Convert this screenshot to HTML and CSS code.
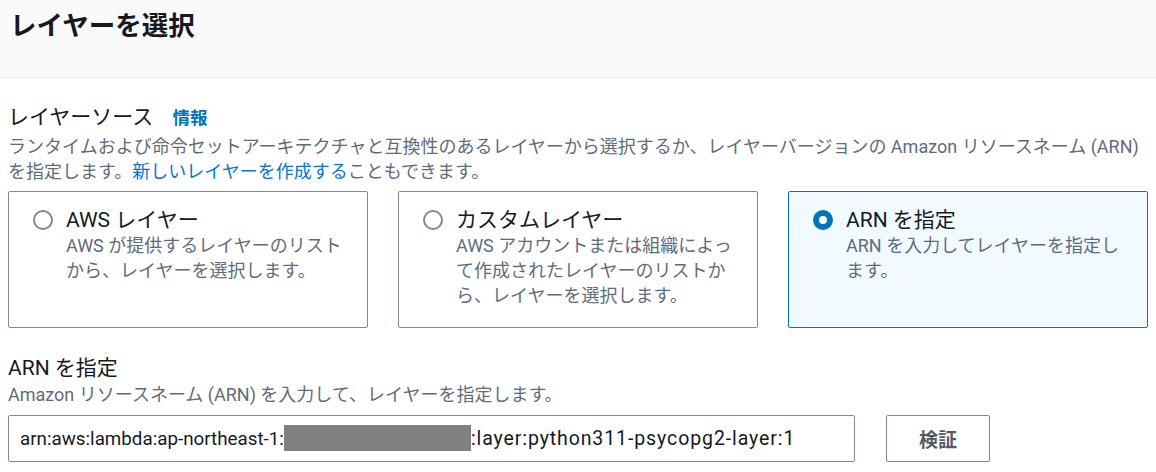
FILE: index.html
```html
<!DOCTYPE html>
<html lang="ja">
<head>
    <meta charset="UTF-8">
    <meta name="viewport" content="width=device-width, initial-scale=1.0">
    <title>レイヤーを選択</title>
    <link rel="stylesheet" href="styles.css">
</head>
<body>
    <div class="page-header">
        <h1>レイヤーを選択</h1>
    </div>

    <div class="content">
        <div class="field-label">
            レイヤーソース <a class="info-link" href="#">情報</a>
        </div>
        <p class="field-desc">ランタイムおよび命令セットアーキテクチャと互換性のあるレイヤーから選択するか、レイヤーバージョンの Amazon リソースネーム (ARN) を指定します。<a class="link" href="#">新しいレイヤーを作成する</a>こともできます。</p>

        <div class="tiles">
            <label class="tile">
                <span class="radio"></span>
                <span class="tile-body">
                    <span class="tile-title">AWS レイヤー</span>
                    <span class="tile-desc">AWS が提供するレイヤーのリストから、レイヤーを選択します。</span>
                </span>
            </label>
            <label class="tile">
                <span class="radio"></span>
                <span class="tile-body">
                    <span class="tile-title">カスタムレイヤー</span>
                    <span class="tile-desc">AWS アカウントまたは組織によって作成されたレイヤーのリストから、レイヤーを選択します。</span>
                </span>
            </label>
            <label class="tile selected">
                <span class="radio"></span>
                <span class="tile-body">
                    <span class="tile-title">ARN を指定</span>
                    <span class="tile-desc">ARN を入力してレイヤーを指定します。</span>
                </span>
            </label>
        </div>

        <div class="field-label arn-label">ARN を指定</div>
        <p class="help-text">Amazon リソースネーム (ARN) を入力して、レイヤーを指定します。</p>

        <div class="arn-row">
            <div class="text-input">arn:aws:lambda:ap-northeast-1:<span class="redacted"></span><span class="arn-tail">:layer:python311-psycopg2-layer:1</span></div>
            <button class="btn">検証</button>
        </div>
    </div>
</body>
</html>
```

FILE: styles.css
```css
body {
    margin: 0;
    font-family: Roboto, "Noto Sans CJK JP", sans-serif;
    color: #16191f;
    background: white;
}
.page-header {
    background: #fafafa;
    border-bottom: 1px solid #e9ebed;
    height: 78px;
    padding: 7px 10px 0;
    box-sizing: border-box;
}
.page-header h1 {
    margin: 0;
    font-size: 26.5px;
    line-height: 38px;
    font-weight: bold;
}
.content {
    padding: 0 8px;
}
.field-label {
    margin-top: 26px;
    font-size: 21px;
    line-height: 26px;
}
.info-link {
    margin-left: 14px;
    font-size: 17.5px;
    font-weight: bold;
    color: #0073bb;
    text-decoration: none;
}
.field-desc {
    margin: 3px 0 0;
    font-size: 18px;
    line-height: 25px;
    color: #5f6b7a;
}
.link {
    color: #0972d3;
    text-decoration: none;
}
.tiles {
    display: grid;
    grid-template-columns: repeat(3, 1fr);
    gap: 30px;
    margin-top: 7px;
}
.tile {
    display: flex;
    gap: 13px;
    height: 137px;
    box-sizing: border-box;
    padding: 15px 20px 0 24px;
    border: 1px solid #7d8998;
    border-radius: 2px;
}
.tile.selected {
    background: #f1faff;
    border-color: #0073bb;
}
.radio {
    flex: none;
    width: 20px;
    height: 20px;
    margin-top: 3px;
    box-sizing: border-box;
    border: 2px solid #7d8998;
    border-radius: 50%;
    background: white;
}
.selected .radio {
    border: 6.5px solid #0073bb;
}
.tile-body {
    display: flex;
    flex-direction: column;
}
.tile-title {
    font-size: 21px;
    line-height: 26px;
}
.tile-desc {
    font-size: 18px;
    line-height: 25px;
    color: #5f6b7a;
}
.arn-label {
    margin-top: 27px;
}
.help-text {
    margin: 3px 0 0;
    font-size: 18px;
    line-height: 22px;
    color: #5f6b7a;
}
.arn-row {
    display: flex;
    gap: 31px;
    margin-top: 9px;
}
.text-input {
    width: 847px;
    height: 47px;
    box-sizing: border-box;
    padding: 0 11px;
    border: 1px solid #7d8998;
    border-radius: 2px;
    font-size: 18.8px;
    line-height: 45px;
    white-space: nowrap;
}
.redacted {
    display: inline-block;
    width: 187px;
    height: 26px;
    vertical-align: -6px;
    background: #808080;
}
.arn-tail {
    font-size: 19.5px;
    letter-spacing: 0.9px;
}
.btn {
    width: 104px;
    height: 47px;
    border: 1px solid #7d8998;
    border-radius: 2px;
    background: white;
    font-family: "Noto Sans CJK JP", sans-serif;
    font-size: 19px;
    font-weight: bold;
    color: #545b64;
}
```
